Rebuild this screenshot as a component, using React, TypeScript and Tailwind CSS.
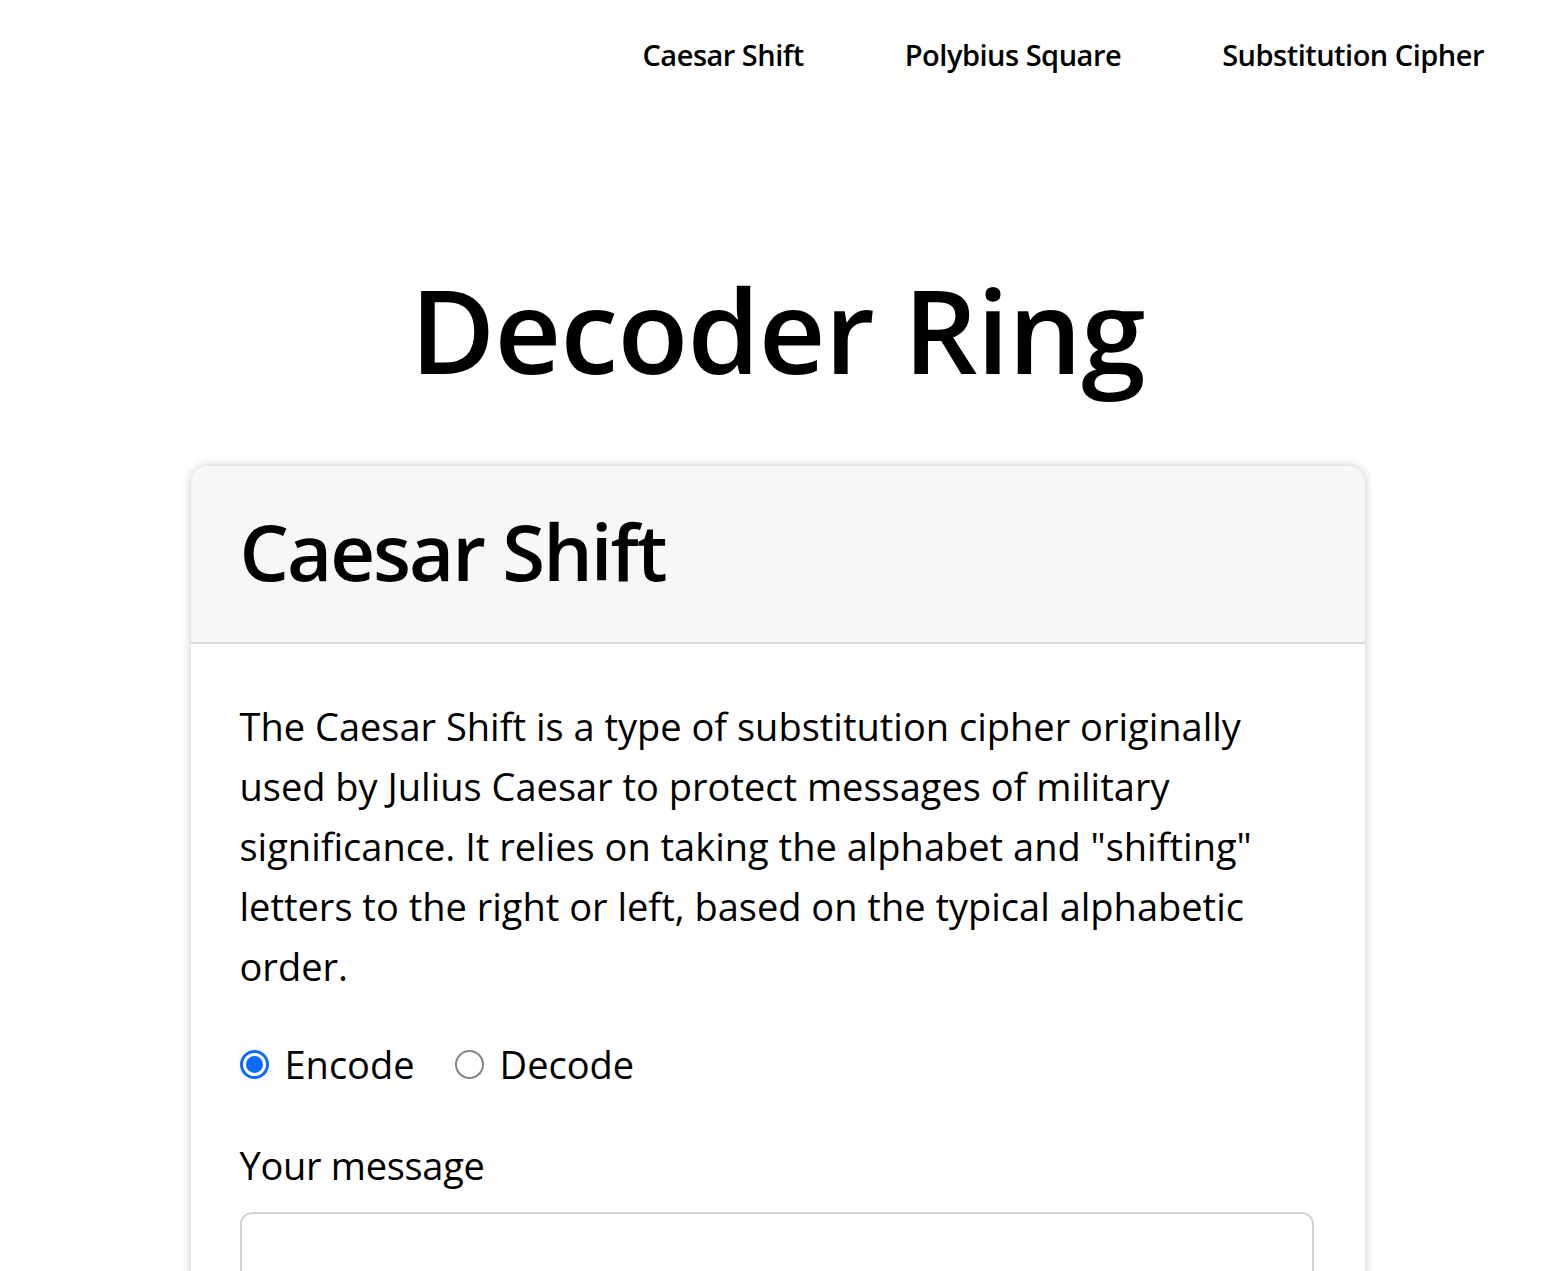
import React, { useState } from 'react';

function Radio({ checked, label, onClick }: { checked: boolean; label: string; onClick: () => void }) {
  return (
    <label className="flex items-center gap-[16px] cursor-pointer" onClick={onClick}>
      {checked ? (
        <span className="w-[29px] h-[29px] rounded-full border-[3px] border-[#0b6cfc] flex items-center justify-center bg-white">
          <span className="w-[17px] h-[17px] rounded-full bg-[#0b6cfc]" />
        </span>
      ) : (
        <span className="w-[29px] h-[29px] rounded-full border-[2px] border-[#858585] bg-white" />
      )}
      <span>{label}</span>
    </label>
  );
}

export default function App() {
  const [mode, setMode] = useState('encode');

  return (
    <div className="min-h-screen bg-white text-black font-['Open_Sans',sans-serif]">
      {/* top nav */}
      <nav className="flex justify-end gap-[101px] pr-[71px] pt-[31px] text-[29px] font-semibold tracking-[-0.5px]">
        <a href="#" className="leading-[48px]">Caesar Shift</a>
        <a href="#" className="leading-[48px]">Polybius Square</a>
        <a href="#" className="leading-[48px]">Substitution Cipher</a>
      </nav>

      <h1 className="text-center text-[116px] font-semibold leading-[1.2] mt-[181px] tracking-[-0.8px]">Decoder Ring</h1>

      <div className="w-[1176px] mx-auto mt-[66px] border border-[#e2e2e2] rounded-[18px] shadow-[0_0_10px_rgba(0,0,0,0.18)] overflow-hidden">
        <div className="bg-[#f7f7f7] border-b-2 border-[#d9d9d9] h-[178px] px-[49px] flex items-center">
          <h2 className="text-[78px] font-semibold leading-none tracking-[-2px] pb-[6px]">Caesar Shift</h2>
        </div>
        <div className="px-[49px] pt-[52px] pb-[60px]">
          <p className="text-[38px] leading-[60px] pr-[20px]">
            The Caesar Shift is a type of substitution cipher originally used by Julius Caesar to protect messages of military
            significance. It relies on taking the alphabet and "shifting" letters to the right or left, based on the typical
            alphabetic order.
          </p>
          <div className="flex gap-[40px] text-[38px] mt-[38px] leading-[60px]">
            <Radio checked={mode === 'encode'} label="Encode" onClick={() => setMode('encode')} />
            <Radio checked={mode === 'decode'} label="Decode" onClick={() => setMode('decode')} />
          </div>
          <label className="block text-[38px] leading-[60px] mt-[41px] tracking-[-0.3px]">Your message</label>
          <textarea className="block w-[1074px] h-[200px] mt-[17px] border-2 border-[#d0d5db] rounded-[12px] outline-none resize-none" />
        </div>
      </div>
    </div>
  );
}
